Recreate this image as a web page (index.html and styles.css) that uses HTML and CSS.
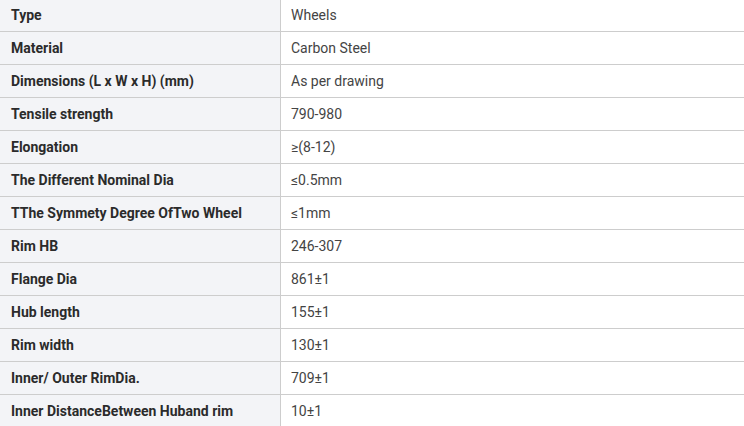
FILE: index.html
```html
<!DOCTYPE html>
<html lang="en">
<head>
<meta charset="utf-8">
<title>Wheel specifications</title>
<link rel="stylesheet" href="styles.css">
</head>
<body>
<table class="spec">
  <tbody>
    <tr><th>Type</th><td>Wheels</td></tr>
    <tr><th>Material</th><td>Carbon Steel</td></tr>
    <tr><th>Dimensions (L x W x H) (mm)</th><td>As per drawing</td></tr>
    <tr><th>Tensile strength</th><td>790-980</td></tr>
    <tr><th>Elongation</th><td>≥(8-12)</td></tr>
    <tr><th>The Different Nominal Dia</th><td>≤0.5mm</td></tr>
    <tr><th>TThe Symmety Degree OfTwo Wheel</th><td>≤1mm</td></tr>
    <tr><th>Rim HB</th><td>246-307</td></tr>
    <tr><th>Flange Dia</th><td>861±1</td></tr>
    <tr><th>Hub length</th><td>155±1</td></tr>
    <tr><th>Rim width</th><td>130±1</td></tr>
    <tr><th>Inner/ Outer RimDia.</th><td>709±1</td></tr>
    <tr><th>Inner DistanceBetween Huband rim</th><td>10±1</td></tr>
  </tbody>
</table>
</body>
</html>
```
FILE: styles.css
```css
html, body {
  margin: 0;
  padding: 0;
  background: #ffffff;
}

body {
  font-family: Roboto, "Liberation Sans", Arial, sans-serif;
  font-size: 14px;
  overflow: hidden;
}

.spec {
  width: 744px;
  border-collapse: separate;
  border-spacing: 0;
  table-layout: fixed;
}

.spec th,
.spec td {
  height: 32px;
  padding: 0;
  border-bottom: 1px solid #cdcdcd;
  vertical-align: middle;
  text-align: left;
  line-height: 16px;
  white-space: nowrap;
}

.spec tr:first-child th,
.spec tr:first-child td {
  height: 29px;
  padding-bottom: 2px;
}

.spec th {
  box-sizing: border-box;
  width: 281px;
  padding-left: 11px;
  background: #f3f4f7;
  border-right: 1px solid #cdcdcd;
  color: #2b2b2b;
  font-weight: 700;
}

.spec td {
  padding-left: 10px;
  color: #444444;
  font-weight: 400;
}
```
